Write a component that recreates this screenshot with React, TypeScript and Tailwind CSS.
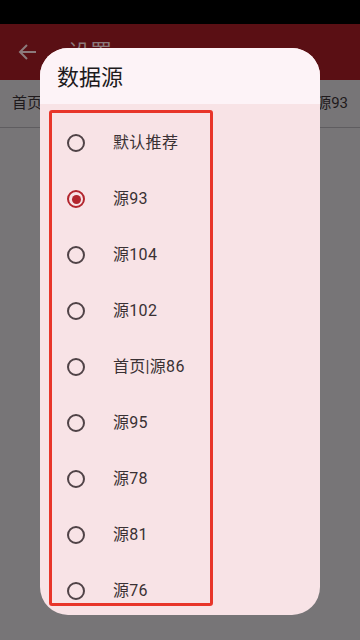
import React, { useState } from 'react'

// 设置页 + "数据源" 单选对话框

const sources = ['默认推荐', '源93', '源104', '源102', '首页|源86', '源95', '源78', '源81', '源76']

const font = { fontFamily: 'Roboto, "Noto Sans CJK SC", sans-serif' }

function Radio({ on }: { on: boolean }) {
  return (
    <span
      className={`flex items-center justify-center w-[18px] h-[18px] rounded-full border-2 ${on ? 'border-[#b3262e]' : 'border-[#504347]'}`}
    >
      {on && <span className="w-[9px] h-[9px] rounded-full bg-[#b3262e]" />}
    </span>
  )
}

export default function App() {
  const [picked, setPicked] = useState(1)

  return (
    <div className="relative w-[360px] h-[640px] overflow-hidden bg-[#777577]" style={font}>
      {/* 状态栏 */}
      <div className="h-6 bg-black" />

      {/* 顶栏 */}
      <div className="h-14 bg-[#5a0f14] flex items-center px-4 gap-7 text-[#8c7a7c]">
        <svg width="24" height="24" viewBox="0 0 24 24" fill="none" stroke="currentColor" strokeWidth="2">
          <path d="M20 12H5M11 5l-7 7 7 7" />
        </svg>
        <span className="text-[22px]">设置</span>
      </div>

      {/* 背后的设置项 */}
      <div className="h-12 flex items-center justify-between pl-3 pr-3 border-b border-[#5f5d60] text-[15px] text-[#1f1a1c]">
        <span>首页</span>
        <span>源93</span>
      </div>

      {/* 对话框 */}
      <div className="absolute left-10 top-12 w-[280px] h-[567px] rounded-[28px] overflow-hidden bg-[#f8e3e6] flex flex-col">
        <div className="h-14 shrink-0 bg-[#fdf3f7] flex items-center px-[17px] pt-[2px] text-[22px] text-[#201a1c]">数据源</div>
        <div className="flex-1 pl-[9px] pt-[6px]">
          <div className="w-[164px] h-[496px] border-[3px] border-[#e8352a] rounded-[3px] overflow-hidden flex flex-col pt-[2px]">
            {sources.map((s, i) => (
              <button
                key={s}
                type="button"
                onClick={() => setPicked(i)}
                className="h-14 shrink-0 flex items-center gap-[28px] pl-[15px] text-[16px] text-[#3a3134] tracking-[0.3px] text-left"
              >
                <Radio on={picked === i} />
                <span>{s}</span>
              </button>
            ))}
          </div>
        </div>
      </div>
    </div>
  )
}
